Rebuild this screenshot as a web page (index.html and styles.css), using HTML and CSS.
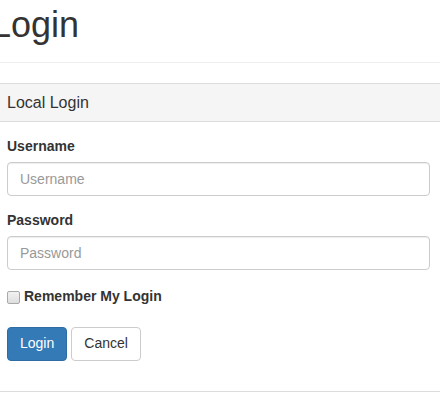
FILE: index.html
```html
<!DOCTYPE html>
<html>
<head>
<meta charset="utf-8">
<link rel="stylesheet" href="styles.css">
</head>
<body>
<div class="container">
  <div class="page-header">
    <h1>Login</h1>
  </div>
  <div class="panel">
    <div class="panel-heading">
      <h3 class="panel-title">Local Login</h3>
    </div>
    <div class="panel-body">
      <form>
        <div class="form-group">
          <label class="control-label" for="username">Username</label>
          <input class="form-control" id="username" placeholder="Username">
        </div>
        <div class="form-group">
          <label class="control-label" for="password">Password</label>
          <input class="form-control" id="password" type="password" placeholder="Password">
        </div>
        <div class="form-group check-group">
          <label class="check-label" for="remember">
            <input type="checkbox" id="remember" class="check">
            <strong>Remember My Login</strong>
          </label>
        </div>
        <div class="form-group buttons">
          <button type="button" class="btn btn-primary">Login</button>
          <button type="button" class="btn btn-default">Cancel</button>
        </div>
      </form>
    </div>
  </div>
</div>
</body>
</html>
```
FILE: styles.css
```css
* { box-sizing: border-box; }
html, body { margin: 0; padding: 0; }
body {
  font-family: "Liberation Sans", Arial, Helvetica, sans-serif;
  font-size: 14px;
  line-height: 1.42857;
  color: #333;
  background: #fff;
  overflow: hidden;
}
.container {
  margin-left: -9px;
  width: 455px;
}
.page-header {
  padding-bottom: 17px;
  border-bottom: 1px solid #eee;
  margin-bottom: 20px;
}
.page-header h1 {
  margin: 5px 0 0;
  font-size: 36px;
  font-weight: 500;
  line-height: 1.1;
}
.panel {
  border: 1px solid #ddd;
  border-radius: 4px;
  background: #fff;
}
.panel-heading {
  padding: 10px 15px;
  background: #f5f5f5;
  border-bottom: 1px solid #ddd;
  border-radius: 3px 3px 0 0;
}
.panel-title {
  margin: 0;
  font-size: 16px;
  font-weight: 500;
  line-height: 1.1;
}
.panel-body {
  padding: 15px;
}
form { margin: 0; }
.form-group {
  margin-bottom: 15px;
}
.control-label {
  display: inline-block;
  margin-bottom: 5px;
  font-weight: 700;
}
.form-control {
  display: block;
  width: 100%;
  height: 34px;
  padding: 6px 12px;
  font-family: inherit;
  font-size: 14px;
  line-height: 1.42857;
  color: #555;
  background: #fff;
  border: 1px solid #ccc;
  border-radius: 4px;
  box-shadow: inset 0 1px 1px rgba(0,0,0,.075);
}
.form-control::placeholder { color: #999; opacity: 1; }
.check-group {
  padding-top: 2px;
  margin-bottom: 20px;
}
.check-label {
  display: flex;
  align-items: center;
  gap: 4px;
}
.check {
  -webkit-appearance: none;
  appearance: none;
  margin: 0;
  width: 13px;
  height: 13px;
  border: 1px solid #a9a9a9;
  border-radius: 2px;
  background: linear-gradient(#f2f2f2, #dedede);
}
.buttons {
  display: flex;
  gap: 4px;
}
.btn {
  display: inline-block;
  height: 34px;
  padding: 6px 12px;
  font-family: inherit;
  font-size: 14px;
  line-height: 1.42857;
  border: 1px solid transparent;
  border-radius: 4px;
  cursor: pointer;
}
.btn-primary {
  color: #fff;
  background: #337ab7;
  border-color: #2e6da4;
}
.btn-default {
  color: #333;
  background: #fff;
  border-color: #ccc;
}
```
